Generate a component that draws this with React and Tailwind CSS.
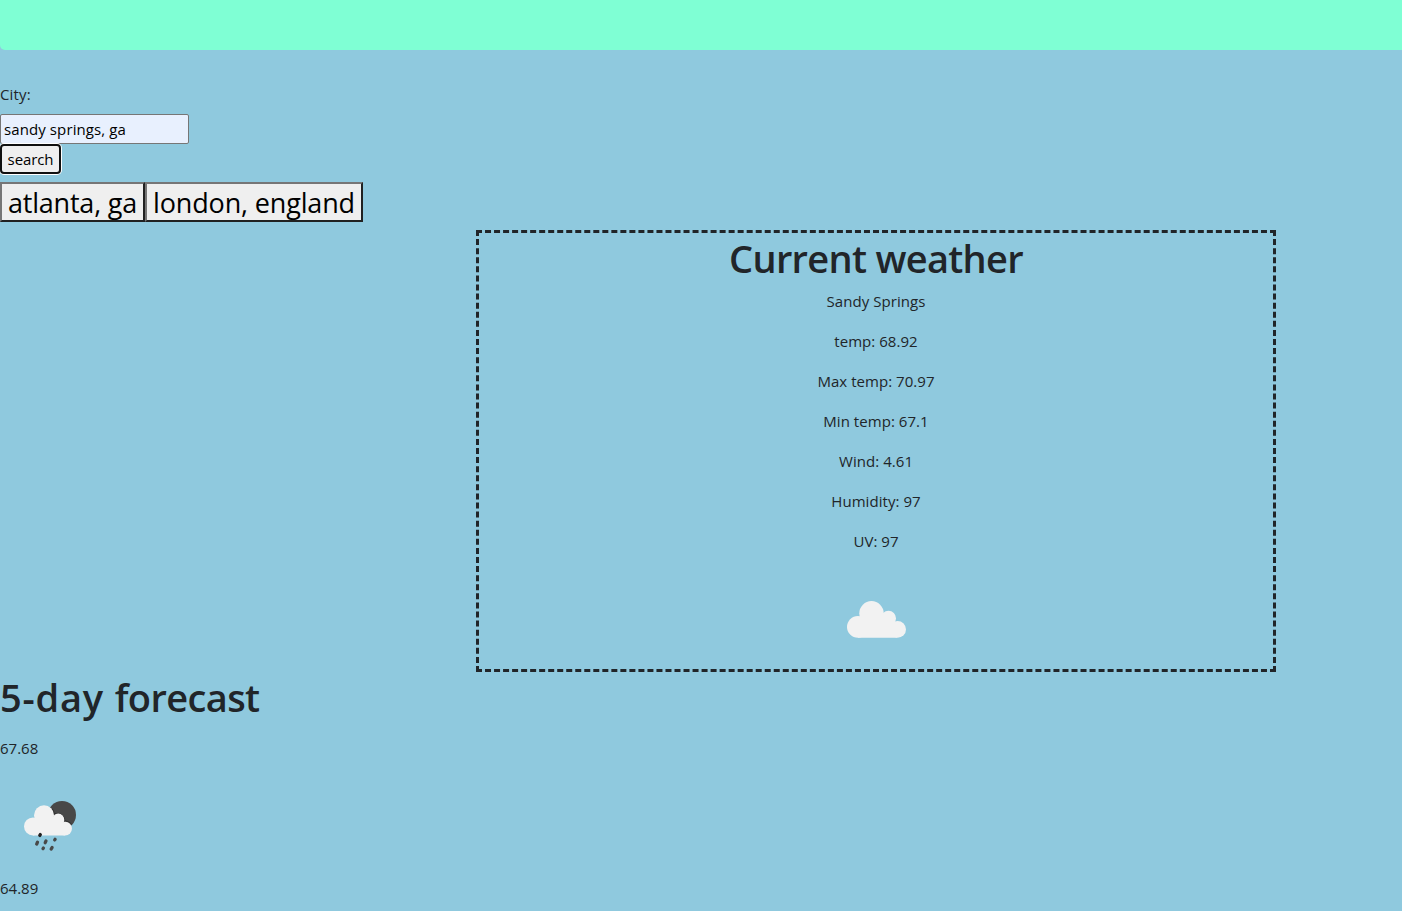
const readings = [
  "Sandy Springs",
  "temp: 68.92",
  "Max temp: 70.97",
  "Min temp: 67.1",
  "Wind: 4.61",
  "Humidity: 97",
  "UV: 97",
];

function CloudIcon() {
  return (
    <svg width="100" height="100" viewBox="0 0 100 100" aria-label="overcast clouds" fill="#f2f2f2">
      <circle cx="31.900" cy="56.900" r="10.900" />
      <circle cx="45.500" cy="43.300" r="12.200" />
      <circle cx="62.500" cy="48.300" r="7.500" />
      <circle cx="71.600" cy="59.400" r="8.400" />
      <path d="M32 67.800V50L38 45H62L71 55V67.800Z" />
    </svg>
  );
}

function RainIcon() {
  return (
    <svg width="100" height="100" viewBox="0 0 100 100" aria-label="light rain">
      <circle cx="62" cy="39" r="14" fill="#484848" />
      <path
        fill="none"
        stroke="#303030"
        strokeWidth="1"
        d="M52 32.500Q54 35 54.300 37.800Q63 35.500 65 44.800Q69 45 71.500 48"
      />
      <g fill="#f2f2f2">
        <circle cx="33" cy="50.400" r="9" />
        <circle cx="44" cy="39.300" r="10" />
        <circle cx="58.200" cy="43.700" r="6.100" />
        <circle cx="65.100" cy="52.600" r="6.900" />
        <path d="M33 59.400V45L39 41H57L65 49V59.500Z" />
      </g>
      <g stroke="#484848" strokeWidth="3.300" strokeLinecap="round">
        <path d="M39.800 59.400L40.300 58.600" stroke="#222222" />
        <path d="M36.700 68.100L37.500 66.200M45.200 66.700L46 64.900M54.700 63.900L55.100 63.300M43 72.700L43.400 72.100M51.200 73.100L52.100 71.400" />
      </g>
    </svg>
  );
}

export default function App() {
  return (
    <div className="h-[911px] overflow-hidden bg-[#8fc9de] font-['Open_Sans','Noto_Sans',sans-serif] text-[15px] leading-6 text-[#212529]">
      <header className="h-[50px] rounded-bl-[5px] bg-[#7fffd4]" />
      <main className="pt-8">
        <label htmlFor="city" className="block h-6 tracking-[0.15px]">City:</label>
        <input
          id="city"
          defaultValue="sandy springs, ga"
          className="mt-2 block h-[30px] w-[189px] rounded-[2px] border border-[#767676] bg-[#e8f0fe] px-[3px] tracking-[0.1px] text-black outline-none"
        />
        <button className="block h-[30px] w-[61px] rounded-[4px] border-2 border-[#101010] bg-[#efefef] tracking-[-0.1px] text-black shadow-[0_0_0_1px_white]">
          search
        </button>
        <div className="mt-2 flex text-[27px] leading-[34px] text-black">
          <button className="h-10 w-[145px] border-2 border-t-[#767676] border-r-[#212121] border-b-[#212121] border-l-[#767676] bg-[#efefef] pt-[2px] tracking-[-0.2px] whitespace-nowrap">
            atlanta, ga
          </button>
          <button className="h-10 w-[218px] border-2 border-t-[#767676] border-r-[#212121] border-b-[#212121] border-l-[#767676] bg-[#efefef] pt-[2px] tracking-[-0.15px] whitespace-nowrap">
            london, england
          </button>
        </div>
        <section className="mt-2 ml-[476px] h-[442px] w-[800px] border-[3px] border-dashed border-[#212529] text-center">
          <h1 className="h-12 text-[38px] leading-[50px] font-semibold tracking-[-0.7px]">Current weather</h1>
          <div className="mt-2 flex flex-col gap-4 tracking-[0.05px]">
            {readings.map((text) => <p key={text}>{text}</p>)}
          </div>
          <div className="mt-[17px] flex justify-center"><CloudIcon /></div>
        </section>
        <h1 className="h-12 text-[38px] leading-[50px] font-semibold">
          <span className="tracking-[0.8px]">5-day </span>
          <span className="tracking-[-0.6px]">forecast</span>
        </h1>
        <p className="mt-4">67.68</p>
        <div className="mt-4"><RainIcon /></div>
        <p>64.89</p>
      </main>
    </div>
  );
}
